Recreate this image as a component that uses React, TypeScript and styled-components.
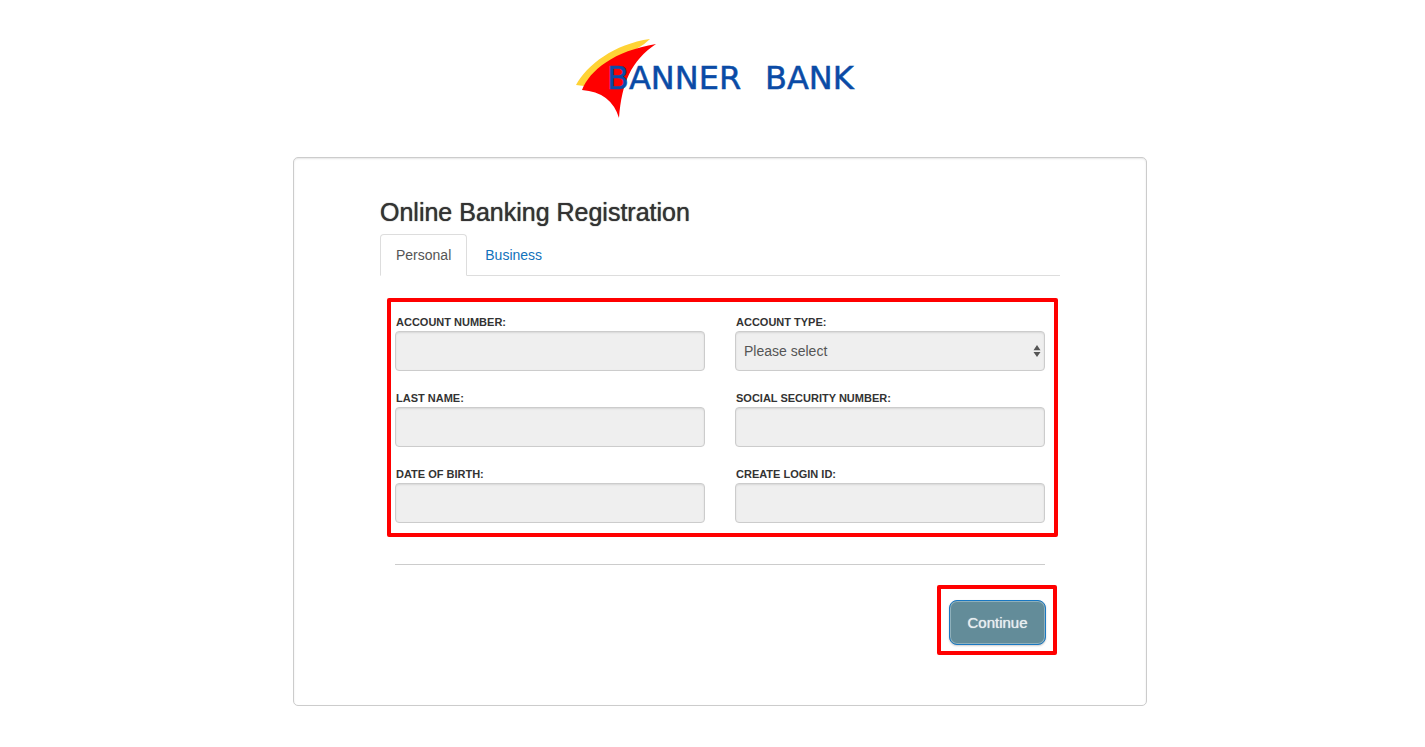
import React from "react";
import styled, { createGlobalStyle } from "styled-components";

const GlobalStyle = createGlobalStyle`
  *, *::before, *::after { box-sizing: border-box; }
  body {
    margin: 0;
    background: #fff;
    color: #333;
    font-family: "Liberation Sans", Arial, sans-serif;
    font-size: 14px;
    line-height: 20px;
  }
`;

const Page = styled.div`
  padding: 39px 0 40px 15px;
`;

const Header = styled.header`
  display: flex;
  justify-content: center;
  margin-bottom: 38px;
`;

const Logo = styled.svg`
  display: block;
  width: 288px;
  height: 80px;
`;

const Card = styled.main`
  width: 100%;
  max-width: 854px;
  margin: 0 auto;
  padding: 37px 86px 50px;
  border: 1px solid #ccc;
  border-radius: 5px;
  box-shadow: inset 0 1px 2px rgba(0, 0, 0, 0.1);
`;

const Title = styled.h1`
  margin: 0 0 5px;
  font-size: 25px;
  line-height: 34px;
  font-weight: 400;
  text-shadow: 0 0 1px #333;
`;

const Tabs = styled.nav`
  display: flex;
  gap: 2px;
  border-bottom: 1px solid #ddd;
`;

const Tab = styled.a<{ $active?: boolean }>`
  margin-bottom: -1px;
  padding: 10px 15px;
  border: 1px solid;
  border-color: ${(p) => (p.$active ? "#ddd #ddd #fff" : "transparent")};
  border-radius: 4px 4px 0 0;
  color: ${(p) => (p.$active ? "#555" : "#1272bb")};
  text-decoration: none;
`;

const Fields = styled.div`
  display: grid;
  grid-template-columns: 1fr 1fr;
  gap: 18px 30px;
  margin: 22px 2px 0 7px;
  padding: 11px 9px 10px 4px;
  border: 4px solid #f00;
  border-radius: 2px;
`;

const Field = styled.div`
  display: flex;
  flex-direction: column;
`;

const Label = styled.label`
  padding-left: 1px;
  font-size: 11px;
  line-height: 18px;
  font-weight: 700;
  text-transform: uppercase;
`;

const Input = styled.input`
  width: 100%;
  height: 40px;
  padding: 0 8px;
  border: 1px solid #ccc;
  border-radius: 4px;
  background: #efefef;
  box-shadow: inset 0 1px 2px rgba(0, 0, 0, 0.1);
  color: #555;
  font: inherit;
`;

const SelectWrap = styled.div`
  position: relative;
`;

const Select = styled(Input).attrs({ as: "select" })`
  display: block;
  appearance: none;
`;

const Arrows = styled.svg`
  position: absolute;
  top: 14px;
  right: 4px;
  width: 8px;
  height: 12px;
  pointer-events: none;
`;

const Divider = styled.hr`
  margin: 27px 15px 20px;
  border: 0;
  border-top: 1px solid #ccc;
`;

const Actions = styled.div`
  width: fit-content;
  margin: 0 3px 0 auto;
  padding: 11px 7px 6px 8px;
  border: 4px solid #f00;
  border-radius: 2px;
`;

const Button = styled.button`
  display: block;
  width: 97px;
  height: 45px;
  padding: 0;
  border: 1px solid #1a78c2;
  border-radius: 8px;
  background: #638c99;
  box-shadow: inset 0 0 0 1px #8fb0bb, 0 1px 2px rgba(0, 0, 0, 0.2);
  color: #e8eef0;
  font-family: inherit;
  font-size: 15px;
  text-shadow: 0 0 1px #e8eef0;
`;

const textFields = [
  { id: "last-name", label: "Last Name:" },
  { id: "ssn", label: "Social Security Number:" },
  { id: "birth-date", label: "Date of Birth:" },
  { id: "login-id", label: "Create Login ID:" },
];

const TextField = ({ id, label }: { id: string; label: string }) => (
  <Field>
    <Label htmlFor={id}>{label}</Label>
    <Input id={id} type="text" />
  </Field>
);

const BankLogo = () => (
  <Logo viewBox="0 0 288 80" role="img" aria-label="Banner Bank">
    <path d="M0 46C11 26 38 5 74 0Q69 5 62 9L30 28L8 47Z" fill="#ffd335" />
    <path d="M6 51C14 31 38 12 80 5C55 22 46 43 43 79Q35 53 6 51Z" fill="#f00" />
    <g
      fill="#0a4ba6"
      stroke="#0a4ba6"
      strokeWidth="0.5"
      fontFamily="'DejaVu Sans', Verdana, sans-serif"
      fontSize="32"
    >
      <text x="31" y="50">BANNER</text>
      <text x="189" y="50">BANK</text>
    </g>
  </Logo>
);

export default function App() {
  return (
    <>
      <GlobalStyle />
      <Page>
        <Header>
          <BankLogo />
        </Header>
        <Card>
          <Title>Online Banking Registration</Title>
          <Tabs>
            <Tab href="#personal" $active aria-current="page">Personal</Tab>
            <Tab href="#business">Business</Tab>
          </Tabs>
          <form onSubmit={(e) => e.preventDefault()}>
            <Fields>
              <TextField id="account-number" label="Account Number:" />
              <Field>
                <Label htmlFor="account-type">Account Type:</Label>
                <SelectWrap>
                  <Select id="account-type">
                    <option>Please select</option>
                  </Select>
                  <Arrows viewBox="0 0 8 12" aria-hidden="true">
                    <path d="M4 0L7.5 5.3H.5ZM4 12L.5 6.9H7.5Z" fill="#555" />
                  </Arrows>
                </SelectWrap>
              </Field>
              {textFields.map((f) => (
                <TextField key={f.id} {...f} />
              ))}
            </Fields>
            <Divider />
            <Actions>
              <Button type="submit">Continue</Button>
            </Actions>
          </form>
        </Card>
      </Page>
    </>
  );
}
